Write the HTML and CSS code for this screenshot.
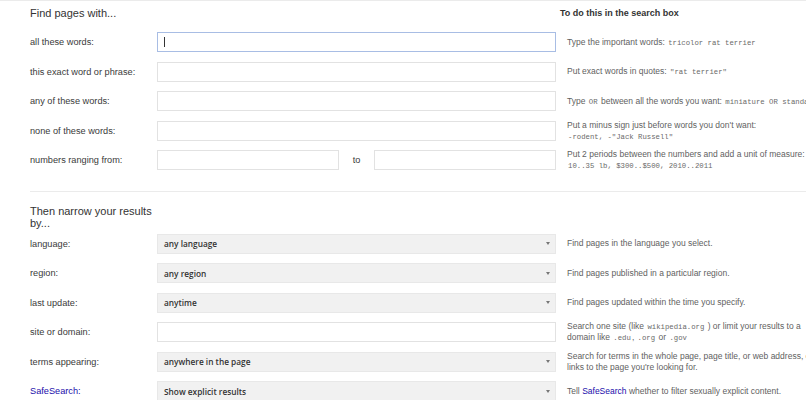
FILE: index.html
```html
<!DOCTYPE html>
<html lang="en">
<head>
<meta charset="utf-8">
<title>Advanced Search</title>
<link rel="stylesheet" href="styles.css">
</head>
<body>
<div class="page">
  <section class="sec">
    <div class="head-row">
      <h2 class="heading">Find pages with...</h2>
      <div class="help-head">To do this in the search box</div>
    </div>
    <div class="row">
      <label class="lbl">all these words:</label>
      <div class="ctl"><div class="field focused"><span class="caret"></span></div></div>
      <div class="help">Type the important words: <code>tricolor rat terrier</code></div>
    </div>
    <div class="row">
      <label class="lbl">this exact word or phrase:</label>
      <div class="ctl"><div class="field"></div></div>
      <div class="help">Put exact words in quotes: <code>"rat terrier"</code></div>
    </div>
    <div class="row">
      <label class="lbl">any of these words:</label>
      <div class="ctl"><div class="field"></div></div>
      <div class="help nowrap">Type <code>OR</code> between all the words you want: <code>miniature OR standard</code></div>
    </div>
    <div class="row">
      <label class="lbl">none of these words:</label>
      <div class="ctl"><div class="field"></div></div>
      <div class="help">Put a minus sign just before words you don't want:<br><code>-rodent, -"Jack Russell"</code></div>
    </div>
    <div class="row">
      <label class="lbl">numbers ranging from:</label>
      <div class="ctl">
        <div class="field half"></div>
        <span class="to">to</span>
        <div class="field half"></div>
      </div>
      <div class="help">Put 2 periods between the numbers and add a unit of measure: <code>10..35 lb, $300..$500, 2010..2011</code></div>
    </div>
  </section>

  <section class="sec sec2">
    <h2 class="heading narrow">Then narrow your results by...</h2>
    <div class="row">
      <label class="lbl">language:</label>
      <div class="ctl"><div class="select"><span>any language</span><span class="arrow"></span></div></div>
      <div class="help">Find pages in the language you select.</div>
    </div>
    <div class="row">
      <label class="lbl">region:</label>
      <div class="ctl"><div class="select"><span>any region</span><span class="arrow"></span></div></div>
      <div class="help">Find pages published in a particular region.</div>
    </div>
    <div class="row">
      <label class="lbl">last update:</label>
      <div class="ctl"><div class="select"><span>anytime</span><span class="arrow"></span></div></div>
      <div class="help">Find pages updated within the time you specify.</div>
    </div>
    <div class="row">
      <label class="lbl">site or domain:</label>
      <div class="ctl"><div class="field"></div></div>
      <div class="help">Search one site (like <code>wikipedia.org</code> ) or limit your results to a domain like <code>.edu</code>, <code>.org</code> or <code>.gov</code></div>
    </div>
    <div class="row">
      <label class="lbl">terms appearing:</label>
      <div class="ctl"><div class="select"><span>anywhere in the page</span><span class="arrow"></span></div></div>
      <div class="help">Search for terms in the whole page, page title, or web address, or links to the page you're looking for.</div>
    </div>
    <div class="row">
      <label class="lbl"><a class="link" href="#">SafeSearch:</a></label>
      <div class="ctl"><div class="select"><span>Show explicit results</span><span class="arrow"></span></div></div>
      <div class="help">Tell <a class="link" href="#">SafeSearch</a> whether to filter sexually explicit content.</div>
    </div>
  </section>
</div>
</body>
</html>
```

FILE: styles.css
```css
html, body {
  margin: 0;
  padding: 0;
  overflow: hidden;
}
body {
  width: 806px;
  height: 400px;
  box-sizing: border-box;
  background: #fff;
  border-top: 1px solid #ebebeb;
  font-family: "Liberation Sans", Arial, sans-serif;
  color: #333;
}
.page {
  width: 900px;
  padding-left: 30px;
}
.head-row {
  display: flex;
  align-items: flex-start;
  height: 20.25px;
  padding-top: 6px;
}
.heading {
  margin: 0;
  font-size: 11px;
  font-weight: normal;
  line-height: 12px;
  color: #333;
}
.head-row .heading {
  width: 530px;
}
.help-head {
  font-size: 9px;
  font-weight: bold;
  line-height: 12px;
  color: #333;
}
.row {
  display: flex;
  align-items: center;
  height: 29.5px;
}
.lbl {
  width: 127px;
  flex: none;
  font-size: 9.2px;
  color: #3a3a3a;
}
.ctl {
  width: 399px;
  flex: none;
  display: flex;
  align-items: center;
}
.help {
  margin-left: 11px;
  width: 250px;
  flex: none;
  font-size: 8.5px;
  line-height: 11px;
  color: #5f5f5f;
}
.help.nowrap {
  white-space: nowrap;
}
code {
  font-family: "Liberation Mono", "Courier New", monospace;
  font-size: 7.3px;
  line-height: 1;
  color: #6a6a6a;
  padding: 0 1px;
}
.field {
  box-sizing: border-box;
  flex: 1;
  height: 20px;
  background: #fff;
  border: 1px solid #e2e2e2;
  display: flex;
  align-items: center;
  padding-left: 6px;
}
.field.focused {
  border-color: #a8bde4;
}
.field.half {
  flex: none;
  width: 182px;
}
.caret {
  width: 1px;
  height: 10px;
  background: #333;
}
.to {
  width: 35px;
  text-align: center;
  font-size: 9.2px;
  color: #3a3a3a;
}
.select {
  box-sizing: border-box;
  flex: 1;
  height: 20px;
  background: #f1f1f1;
  border: 1px solid #e8e8e8;
  display: flex;
  align-items: center;
  justify-content: space-between;
  padding: 0 5px 0 6px;
  font-family: "Open Sans", "Liberation Sans", sans-serif;
  font-weight: 600;
  font-size: 8.3px;
  color: #333;
}
.arrow {
  width: 0;
  height: 0;
  border-left: 2.5px solid transparent;
  border-right: 2.5px solid transparent;
  border-top: 3px solid #777;
}
.sec2 {
  margin-top: 16px;
  padding-top: 13px;
  border-top: 1px solid #ebebeb;
}
.narrow {
  width: 127px;
}
.link {
  color: #1a0dab;
  text-decoration: none;
}
```
